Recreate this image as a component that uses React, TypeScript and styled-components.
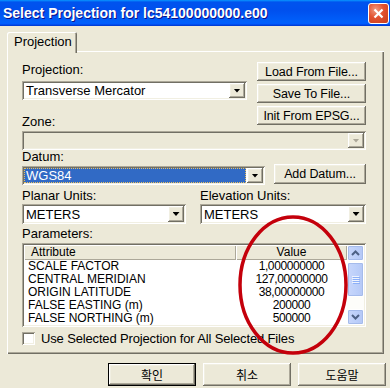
import React from 'react';
import styled, { createGlobalStyle, css } from 'styled-components';

const params = [
  { name: 'SCALE FACTOR', value: '1,000000000' },
  { name: 'CENTRAL MERIDIAN', value: '127,00000000' },
  { name: 'ORIGIN LATITUDE', value: '38,00000000' },
  { name: 'FALSE EASTING (m)', value: '200000' },
  { name: 'FALSE NORTHING (m)', value: '500000' },
];

const GlobalStyle = createGlobalStyle`
  html, body {
    margin: 0;
    padding: 0;
    background: #ece9d8;
  }
  body {
    font-family: 'Liberation Sans', Arial, sans-serif;
    font-size: 13px;
    color: #000;
  }
  * { box-sizing: border-box; }
`;

const raised = css`
  box-shadow: inset -1px -1px #716f64, inset 1px 1px #fff, inset -2px -2px #aca899, inset 2px 2px #f1efe2;
`;

const sunken = css`
  box-shadow: inset 1px 1px #aca899, inset -1px -1px #fff, inset 2px 2px #716f64, inset -2px -2px #f1efe2;
`;

const Window = styled.div`
  position: relative;
  width: 390px;
  height: 388px;
  overflow: hidden;
  background: #ece9d8;
  display: flex;
  flex-direction: column;
`;

const TitleBar = styled.div`
  flex: none;
  height: 26px;
  display: flex;
  align-items: center;
  justify-content: space-between;
  padding: 0 1px 0 3px;
  background: linear-gradient(to bottom, #0997ff 0%, #0053ee 8%, #0050ee 40%, #0060fb 85%, #005bff 92%, #003dd7 97%, #003dd7 100%);
`;

const TitleText = styled.div`
  color: #fff;
  font-weight: bold;
  font-size: 14px;
  line-height: 15px;
  text-shadow: 1px 1px #0f1089;
  white-space: nowrap;
`;

const CloseButton = styled.div`
  width: 21px;
  height: 21px;
  border: 1px solid #fff;
  border-radius: 3px;
  background: radial-gradient(circle at 35% 30%, #f09a80 0%, #e2512f 45%, #c73e1c 100%);
  display: flex;
  align-items: center;
  justify-content: center;
`;

const Body = styled.div`
  flex: 1;
  display: flex;
  flex-direction: column;
  padding: 6px 6px 0 7px;
`;

const TabStrip = styled.div`
  height: 19px;
  display: flex;
`;

const Tab = styled.div`
  position: relative;
  z-index: 1;
  width: 70px;
  height: 21px;
  padding: 2px 0 0 7px;
  line-height: 15px;
  background: #ece9d8;
  border-radius: 2px 2px 0 0;
  box-shadow: inset 1px 1px #fff, inset -1px 0 #716f64, inset -2px 0 #aca899;
`;

const Panel = styled.div`
  display: flex;
  flex-direction: column;
  padding: 11px 18px 9px 15px;
  box-shadow: inset 1px 1px #fff, inset -1px -1px #716f64, inset -2px -2px #aca899;
`;

const Row = styled.div<{ $gap?: number; $mt?: number }>`
  display: flex;
  gap: ${p => p.$gap ?? 0}px;
  margin-top: ${p => p.$mt ?? 0}px;
`;

const Col = styled.div<{ $w?: number }>`
  display: flex;
  flex-direction: column;
  width: ${p => (p.$w ? `${p.$w}px` : 'auto')};
  flex: ${p => (p.$w ? 'none' : 1)};
`;

const ButtonStack = styled.div`
  display: flex;
  flex-direction: column;
  gap: 3px;
  width: 109px;
  margin-right: -4px;
`;

const Label = styled.div<{ $mt?: number }>`
  line-height: 14px;
  height: 14px;
  margin-top: ${p => p.$mt ?? 0}px;
  white-space: nowrap;
`;

const Button = styled.div<{ $w?: number; $h?: number; $default?: boolean }>`
  width: ${p => (p.$w ? `${p.$w}px` : '100%')};
  height: ${p => p.$h ?? 19}px;
  flex: none;
  display: flex;
  align-items: center;
  justify-content: center;
  background: #ece9d8;
  font-size: 12.5px;
  letter-spacing: -0.1px;
  white-space: nowrap;
  ${raised}
  ${p =>
    p.$default &&
    css`
      border: 1px solid #000;
    `}
`;

const KoreanText = styled.span`
  font-family: 'Noto Sans CJK KR', 'Liberation Sans', sans-serif;
  font-size: 12px;
  letter-spacing: 0;
`;

const Combo = styled.div<{ $w?: number; $h?: number; $mt?: number; $disabled?: boolean }>`
  display: flex;
  width: ${p => (p.$w ? `${p.$w}px` : '100%')};
  height: ${p => p.$h ?? 19}px;
  margin-top: ${p => p.$mt ?? 0}px;
  padding: 2px;
  background: ${p => (p.$disabled ? '#ece9d8' : '#fff')};
  ${sunken}
`;

const ComboValue = styled.div<{ $selected?: boolean }>`
  flex: 1;
  display: flex;
  align-items: center;
  padding-left: 2px;
  margin-right: 1px;
  white-space: nowrap;
  ${p =>
    p.$selected &&
    css`
      background: #316ac5;
      color: #fff;
      outline: 1px dotted #e8c060;
      outline-offset: -1px;
    `}
`;

const ComboArrow = styled.div<{ $disabled?: boolean }>`
  width: 16px;
  flex: none;
  display: flex;
  align-items: center;
  justify-content: center;
  background: #ece9d8;
  ${raised}
  &::after {
    content: '';
    width: 7px;
    height: 4px;
    background: ${p => (p.$disabled ? '#aca899' : '#000')};
    clip-path: polygon(0 0, 100% 0, 50% 100%);
  }
`;

const ListView = styled.div`
  display: flex;
  height: 84px;
  margin-top: 2px;
  padding: 2px;
  background: #fff;
  ${sunken}
`;

const ListMain = styled.div`
  flex: 1;
  display: flex;
  flex-direction: column;
  font-size: 12px;
`;

const ListGrid = styled.div`
  display: grid;
  grid-template-columns: 212px 1fr;
`;

const HeaderCell = styled.div<{ $center?: boolean }>`
  height: 15px;
  line-height: 14px;
  padding-left: ${p => (p.$center ? 0 : 7)}px;
  text-align: ${p => (p.$center ? 'center' : 'left')};
  background: #ece9d8;
  box-shadow: inset 1px 1px #fff, inset -1px -1px #aca899;
`;

const Cell = styled.div<{ $center?: boolean }>`
  height: 13px;
  line-height: 13px;
  padding-left: ${p => (p.$center ? 0 : 4)}px;
  text-align: ${p => (p.$center ? 'center' : 'left')};
  white-space: nowrap;
  letter-spacing: ${p => (p.$center ? '-0.4px' : '0')};
`;

const ScrollBar = styled.div`
  width: 17px;
  flex: none;
  display: flex;
  flex-direction: column;
  background: #fdfdfa;
`;

const ScrollButton = styled.div<{ $h: number }>`
  height: ${p => p.$h}px;
  flex: none;
  border: 1px solid #fff;
  border-radius: 2px;
  background: linear-gradient(to right, #c8d6fb, #bdd0fa 50%, #b4c7f6);
  box-shadow: inset 0 0 0 1px #a5bbeb;
  display: flex;
  align-items: center;
  justify-content: center;
`;

const Track = styled.div`
  flex: 1;
`;

const CheckRow = styled.div`
  display: flex;
  align-items: center;
  gap: 6px;
  margin-top: 5px;
  height: 13px;
  letter-spacing: -0.15px;
`;

const CheckBox = styled.div`
  width: 13px;
  height: 13px;
  background: #fff;
  ${sunken}
`;

const Footer = styled.div`
  display: flex;
  justify-content: flex-end;
  gap: 7px;
  margin-top: 9px;
  margin-right: -2px;
`;

const Overlay = styled.svg`
  position: absolute;
  left: 238px;
  top: 214px;
  pointer-events: none;
`;

const Chevron = ({ up }: { up?: boolean }) => (
  <svg width="9" height="6" viewBox="0 0 9 6">
    <polyline
      points={up ? '1,5 4.5,1.5 8,5' : '1,1 4.5,4.5 8,1'}
      fill="none"
      stroke="#4d6185"
      strokeWidth="2"
    />
  </svg>
);

const Grip = () => (
  <svg width="8" height="8" viewBox="0 0 8 8">
    {[0, 2, 4, 6].map(y => (
      <g key={y}>
        <rect x="0" y={y} width="7" height="1" fill="#eef3fe" />
        <rect x="1" y={y + 1} width="7" height="1" fill="#8cb0f8" />
      </g>
    ))}
  </svg>
);

const App = () => {
  return (
    <Window>
      <GlobalStyle />
      <TitleBar>
        <TitleText>Select Projection for lc54100000000.e00</TitleText>
        <CloseButton>
          <svg width="11" height="11" viewBox="0 0 11 11">
            <path d="M1.5 1.5 L9.5 9.5 M9.5 1.5 L1.5 9.5" stroke="#fff" strokeWidth="2.2" />
          </svg>
        </CloseButton>
      </TitleBar>
      <Body>
        <TabStrip>
          <Tab>Projection</Tab>
        </TabStrip>
        <Panel>
          <Row $gap={10}>
            <Col $w={225}>
              <Label $mt={1}>Projection:</Label>
              <Combo $mt={4}>
                <ComboValue>Transverse Mercator</ComboValue>
                <ComboArrow />
              </Combo>
              <Label $mt={15}>Zone:</Label>
            </Col>
            <ButtonStack>
              <Button>Load From File...</Button>
              <Button>Save To File...</Button>
              <Button>Init From EPSG...</Button>
            </ButtonStack>
          </Row>
          <Combo $mt={2} $disabled>
            <ComboValue />
            <ComboArrow $disabled />
          </Combo>
          <Row $gap={9}>
            <Col $w={243}>
              <Label>Datum:</Label>
              <Combo $mt={2}>
                <ComboValue $selected>WGS84</ComboValue>
                <ComboArrow />
              </Combo>
            </Col>
            <Col>
              <Button $h={20} style={{ marginTop: 'auto', marginBottom: 1 }}>
                Add Datum...
              </Button>
            </Col>
          </Row>
          <Row $gap={14} $mt={4}>
            <Col $w={164}>
              <Label>Planar Units:</Label>
              <Combo $mt={1} $h={20}>
                <ComboValue>METERS</ComboValue>
                <ComboArrow />
              </Combo>
            </Col>
            <Col>
              <Label>Elevation Units:</Label>
              <Combo $mt={1} $h={20}>
                <ComboValue>METERS</ComboValue>
                <ComboArrow />
              </Combo>
            </Col>
          </Row>
          <Label $mt={3}>Parameters:</Label>
          <ListView>
            <ListMain>
              <ListGrid>
                <HeaderCell>Attribute</HeaderCell>
                <HeaderCell $center>Value</HeaderCell>
              </ListGrid>
              <ListGrid>
                {params.map(p => (
                  <React.Fragment key={p.name}>
                    <Cell>{p.name}</Cell>
                    <Cell $center>{p.value}</Cell>
                  </React.Fragment>
                ))}
              </ListGrid>
            </ListMain>
            <ScrollBar>
              <ScrollButton $h={16}>
                <Chevron up />
              </ScrollButton>
              <ScrollButton $h={35} style={{ marginTop: 1 }}>
                <Grip />
              </ScrollButton>
              <Track />
              <ScrollButton $h={16}>
                <Chevron />
              </ScrollButton>
            </ScrollBar>
          </ListView>
          <CheckRow>
            <CheckBox />
            <span>Use Selected Projection for All Selected Files</span>
          </CheckRow>
        </Panel>
        <Footer>
          <Button $w={88} $h={23} $default>
            <KoreanText>확인</KoreanText>
          </Button>
          <Button $w={88} $h={23}>
            <KoreanText>취소</KoreanText>
          </Button>
          <Button $w={88} $h={23}>
            <KoreanText>도움말</KoreanText>
          </Button>
        </Footer>
      </Body>
      <Overlay width="112" height="142" viewBox="0 0 112 142">
        <ellipse cx="55" cy="71" rx="53" ry="68" fill="none" stroke="#c4000b" strokeWidth="3.5" />
      </Overlay>
    </Window>
  );
};

export default App;
